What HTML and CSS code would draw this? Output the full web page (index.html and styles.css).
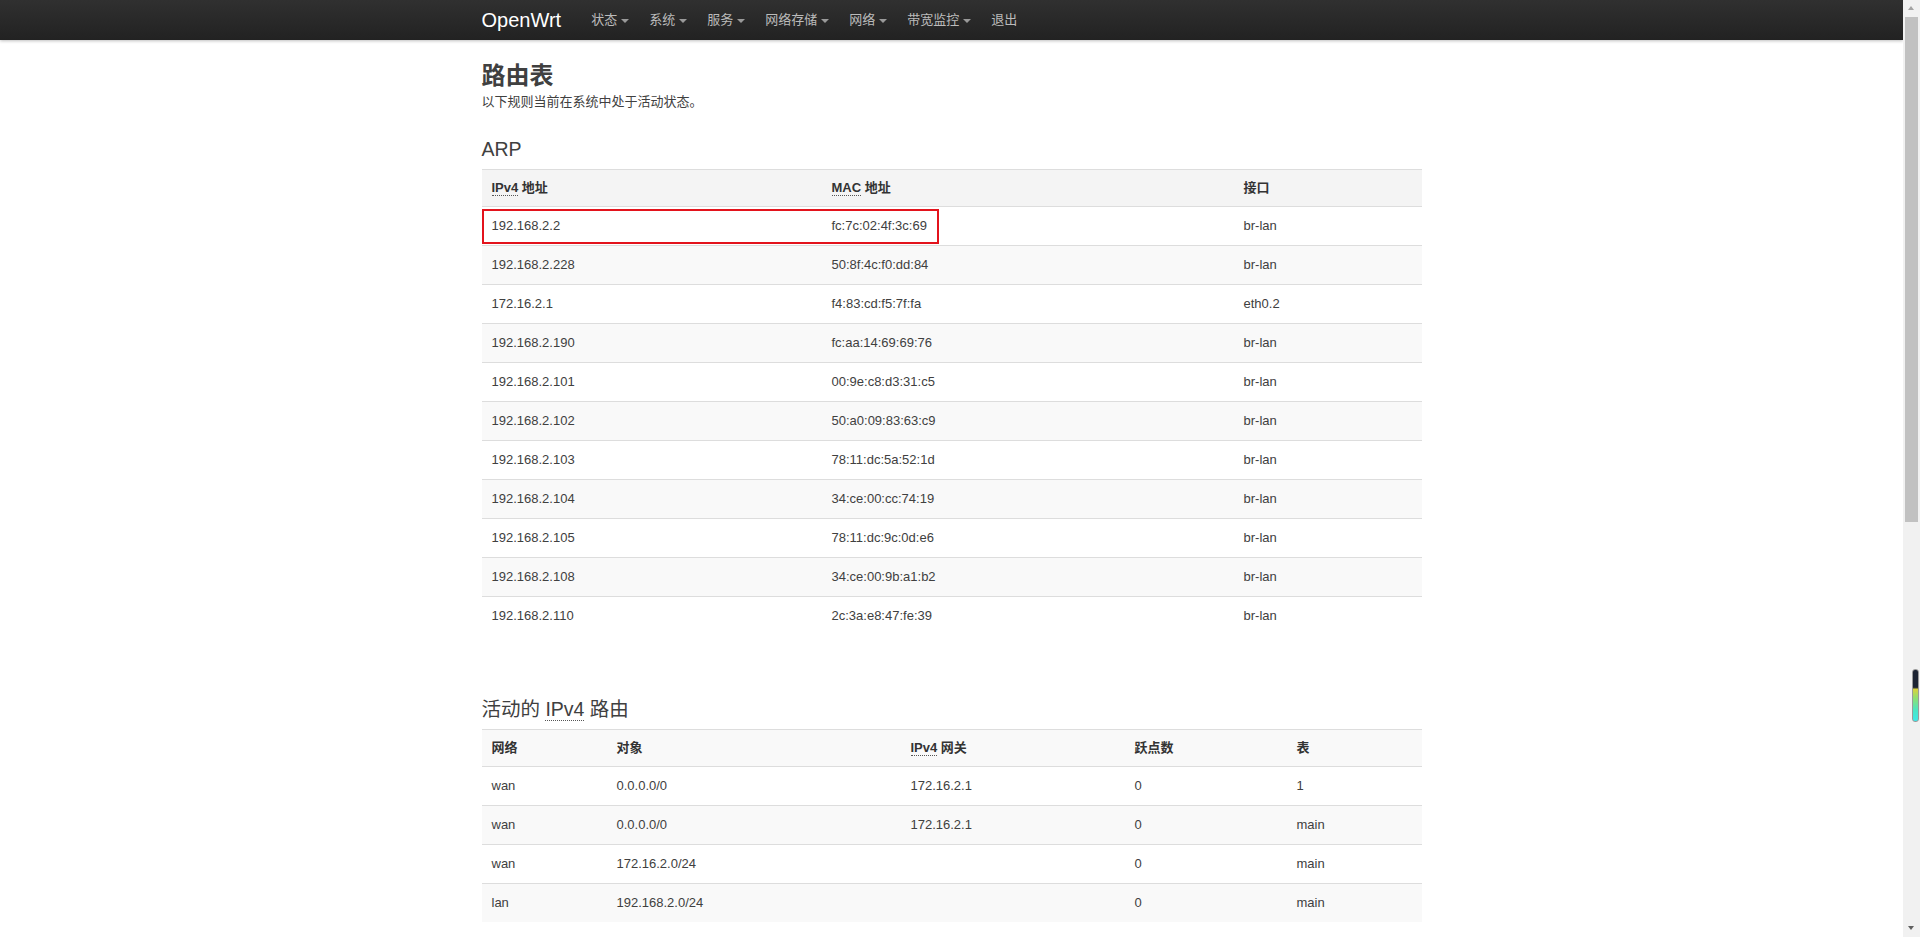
FILE: index.html
```html
<!DOCTYPE html>
<html lang="zh-CN">
<head>
<meta charset="utf-8">
<title>路由表 - OpenWrt</title>
<link rel="stylesheet" href="styles.css">
</head>
<body>
<header class="topbar">
  <div class="topbar-inner">
    <a class="brand" href="#">OpenWrt</a>
    <ul class="nav">
      <li><a href="#">状态<span class="caret"></span></a></li>
      <li><a href="#">系统<span class="caret"></span></a></li>
      <li><a href="#">服务<span class="caret"></span></a></li>
      <li><a href="#">网络存储<span class="caret"></span></a></li>
      <li><a href="#">网络<span class="caret"></span></a></li>
      <li><a href="#">带宽监控<span class="caret"></span></a></li>
      <li><a href="#">退出</a></li>
    </ul>
  </div>
</header>

<main class="page">
  <div class="container">
    <div class="page-header">
      <h2>路由表</h2>
      <p>以下规则当前在系统中处于活动状态。</p>
    </div>

    <section class="section">
      <h3>ARP</h3>
      <div class="table-wrap">
        <table class="tbl tbl-arp">
          <colgroup><col class="c-ip"><col class="c-mac"><col class="c-if"></colgroup>
          <thead>
            <tr><th><abbr title="Internet Protocol Version 4">IPv4</abbr> 地址</th><th><abbr title="Media Access Control">MAC</abbr> 地址</th><th>接口</th></tr>
          </thead>
          <tbody>
            <tr><td>192.168.2.2</td><td>fc:7c:02:4f:3c:69</td><td>br-lan</td></tr>
            <tr><td>192.168.2.228</td><td>50:8f:4c:f0:dd:84</td><td>br-lan</td></tr>
            <tr><td>172.16.2.1</td><td>f4:83:cd:f5:7f:fa</td><td>eth0.2</td></tr>
            <tr><td>192.168.2.190</td><td>fc:aa:14:69:69:76</td><td>br-lan</td></tr>
            <tr><td>192.168.2.101</td><td>00:9e:c8:d3:31:c5</td><td>br-lan</td></tr>
            <tr><td>192.168.2.102</td><td>50:a0:09:83:63:c9</td><td>br-lan</td></tr>
            <tr><td>192.168.2.103</td><td>78:11:dc:5a:52:1d</td><td>br-lan</td></tr>
            <tr><td>192.168.2.104</td><td>34:ce:00:cc:74:19</td><td>br-lan</td></tr>
            <tr><td>192.168.2.105</td><td>78:11:dc:9c:0d:e6</td><td>br-lan</td></tr>
            <tr><td>192.168.2.108</td><td>34:ce:00:9b:a1:b2</td><td>br-lan</td></tr>
            <tr><td>192.168.2.110</td><td>2c:3a:e8:47:fe:39</td><td>br-lan</td></tr>
          </tbody>
        </table>
        <div class="mark"></div>
      </div>
    </section>

    <section class="section section-routes">
      <h3>活动的 <abbr title="Internet Protocol Version 4">IPv4</abbr> 路由</h3>
      <div class="table-wrap">
        <table class="tbl tbl-route">
          <colgroup><col class="c-net"><col class="c-target"><col class="c-gw"><col class="c-metric"><col class="c-table"></colgroup>
          <thead>
            <tr><th>网络</th><th>对象</th><th><abbr title="Internet Protocol Version 4">IPv4</abbr> 网关</th><th>跃点数</th><th>表</th></tr>
          </thead>
          <tbody>
            <tr><td>wan</td><td>0.0.0.0/0</td><td>172.16.2.1</td><td>0</td><td>1</td></tr>
            <tr><td>wan</td><td>0.0.0.0/0</td><td>172.16.2.1</td><td>0</td><td>main</td></tr>
            <tr><td>wan</td><td>172.16.2.0/24</td><td></td><td>0</td><td>main</td></tr>
            <tr><td>lan</td><td>192.168.2.0/24</td><td></td><td>0</td><td>main</td></tr>
          </tbody>
        </table>
      </div>
    </section>
  </div>
</main>

<div class="scrollbar">
  <span class="sb-up"></span>
  <span class="sb-thumb"></span>
  <span class="sb-down"></span>
</div>
<div class="meter"></div>
</body>
</html>
```
FILE: styles.css
```css
body {
  margin: 0 17px 0 0;
  font-family: "Liberation Sans", Arial, "Noto Sans CJK SC", sans-serif;
  font-size: 13px;
  line-height: 18px;
  color: #404040;
  background: #fff;
}

/* ---------- top bar ---------- */
.topbar {
  height: 40px;
  background: linear-gradient(to bottom, #303030, #222);
  box-shadow: 0 1px 3px rgba(0, 0, 0, 0.25);
}
.topbar-inner {
  width: 940px;
  margin: 0 auto;
  height: 40px;
  display: flex;
  align-items: center;
}
.brand {
  font-size: 20px;
  line-height: 1;
  color: #fff;
  text-decoration: none;
  margin-right: 20px;
}
.nav {
  display: flex;
  list-style: none;
  margin: 0;
  padding: 0;
}
.nav a {
  display: flex;
  align-items: center;
  height: 40px;
  padding: 0 10px;
  color: #bbb;
  text-decoration: none;
}
.caret {
  display: inline-block;
  margin-left: 4px;
  margin-top: 2px;
  width: 0;
  height: 0;
  border-top: 4px solid #999;
  border-left: 4px solid transparent;
  border-right: 4px solid transparent;
}

/* ---------- page ---------- */
.container {
  width: 940px;
  margin: 0 auto;
}
.page-header h2 {
  margin: 0;
  padding-top: 19px;
  font-size: 24px;
  line-height: 34px;
  font-weight: bold;
  color: #404040;
}
.page-header p {
  margin: 0;
}

.section h3 {
  margin: 25px 0 6px;
  font-size: 19.5px;
  line-height: 27px;
  font-weight: normal;
  color: #404040;
}
.section-routes {
  margin-top: 61px;
}

abbr {
  text-decoration: none;
  border-bottom: 1px dotted #555;
}

.table-wrap {
  position: relative;
}
.tbl {
  width: 940px;
  table-layout: fixed;
  border-collapse: separate;
  border-spacing: 0;
}
.tbl th {
  padding: 9px 10px;
  line-height: 18px;
  text-align: left;
  font-weight: bold;
  color: #333;
  border-top: 1px solid #ddd;
  background: #f9f9f9;
}
.tbl-arp th {
  background: #f4f4f4;
}
.tbl td {
  padding: 10px 10px;
  line-height: 18px;
  border-top: 1px solid #ddd;
  background: #fff;
  white-space: nowrap;
}
.tbl tbody tr:nth-child(even) td {
  background: #f9f9f9;
}

.c-ip { width: 340px; }
.c-mac { width: 412px; }
.c-if { width: 188px; }

.c-net { width: 125px; }
.c-target { width: 294px; }
.c-gw { width: 224px; }
.c-metric { width: 162px; }
.c-table { width: 135px; }

.mark {
  position: absolute;
  left: 0;
  top: 40px;
  width: 457px;
  height: 35px;
  box-sizing: border-box;
  border: 2px solid #e3131c;
  pointer-events: none;
}

/* ---------- window scrollbar ---------- */
.scrollbar {
  position: fixed;
  top: 0;
  right: 0;
  width: 17px;
  height: 100vh;
  background: #f1f1f1;
}
.sb-thumb {
  position: absolute;
  top: 17px;
  left: 2px;
  width: 13px;
  height: 505px;
  background: #c1c1c1;
}
.sb-up,
.sb-down {
  position: absolute;
  left: 5px;
  width: 0;
  height: 0;
  border-left: 3.5px solid transparent;
  border-right: 3.5px solid transparent;
}
.sb-up {
  top: 6px;
  border-bottom: 4px solid #a3a3a3;
}
.sb-down {
  bottom: 7px;
  border-top: 4px solid #606060;
}

/* small overlay widget on the scrollbar */
.meter {
  position: fixed;
  right: 1px;
  top: 669px;
  width: 5px;
  height: 51px;
  border: 1px solid #9a9a9a;
  border-radius: 3px;
  background: linear-gradient(to bottom, #1d2433 0, #1d2433 34%, #d9d23c 38%, #8fe070 55%, #48e6c8 80%, #3ee8e8 100%);
}
```
